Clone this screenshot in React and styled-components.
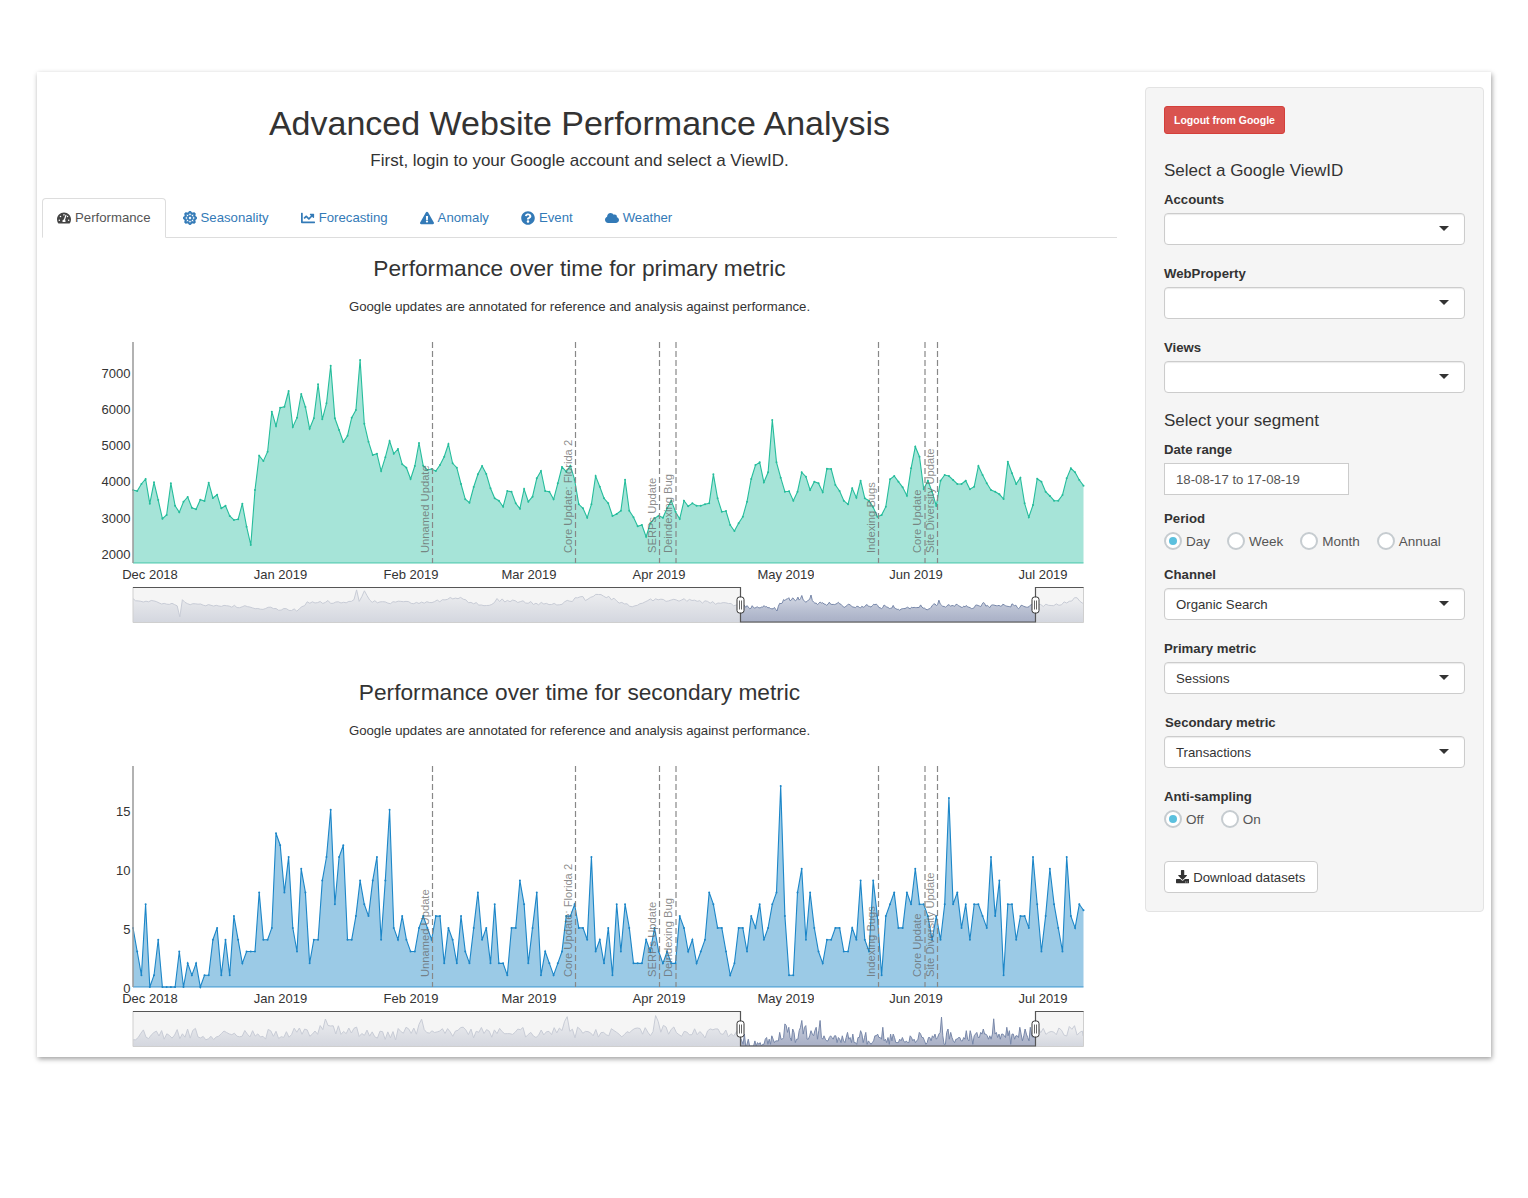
import React from "react";
import styled, { createGlobalStyle } from "styled-components";
import {
  FaChartLine,
  FaCloud,
  FaDownload,
  FaExclamationTriangle,
  FaQuestionCircle,
  FaRegSun,
  FaTachometerAlt,
} from "react-icons/fa";

const GlobalStyle = createGlobalStyle`
  * { box-sizing: border-box; }
  body {
    margin: 0;
    background: #fff;
    color: #333;
    font-family: "Liberation Sans", Arial, sans-serif;
    font-size: 13.2px;
  }
`;

const Page = styled.div`
  min-height: 1198px;
  padding: 72px 0 0 37px;
`;
const Card = styled.div`
  display: flex;
  align-items: flex-start;
  width: 1454px;
  height: 985px;
  background: #fff;
  box-shadow: 1px 2px 5px rgba(0, 0, 0, 0.38);
`;
const Main = styled.main`
  width: 1075px;
  margin-left: 5px;
  padding-top: 32px;
`;
const Heading = styled.h1`
  margin: 0;
  font-size: 34px;
  font-weight: 400;
  line-height: 38px;
  text-align: center;
`;
const Lead = styled.p`
  margin: 8px 0 0;
  font-size: 17px;
  line-height: 22px;
  text-align: center;
`;
const Tabs = styled.ul`
  display: flex;
  height: 40px;
  margin: 26px 0 0;
  padding: 0;
  list-style: none;
  border-bottom: 1px solid #ddd;
`;
const Tab = styled.li`
  display: flex;
  align-items: center;
  gap: 4px;
  height: 39px;
  margin-right: 2px;
  padding: 0 14px;
  border: 1px solid ${(p) => (p.$active ? "#ddd" : "transparent")};
  border-bottom-color: ${(p) => (p.$active ? "#fff" : "transparent")};
  border-radius: 4px 4px 0 0;
  background: ${(p) => (p.$active ? "#fff" : "transparent")};
  color: ${(p) => (p.$active ? "#555" : "#337ab7")};
  svg { font-size: 14px; color: ${(p) => (p.$active ? "#444" : "#337ab7")}; }
  &:first-child { height: 40px; padding-bottom: 1px; }
`;
const SunIcon = styled(FaRegSun)`
  stroke: currentColor;
  stroke-width: 30;
`;
const Section = styled.section`
  height: 424px;
  padding-top: 17px;
`;
const SectionTitle = styled.h3`
  margin: 0;
  font-size: 22.7px;
  font-weight: 400;
  line-height: 26px;
  text-align: center;
`;
const SectionNote = styled.p`
  margin: 15px 0 23px;
  line-height: 21px;
  text-align: center;
`;
const ChartSvg = styled.svg`
  display: block;
  width: 1075px;
  height: 293px;
`;
const AxisText = styled.text`
  fill: #333;
  font-size: 13px;
  text-anchor: ${(p) => p.$anchor || "middle"};
`;
const NoteText = styled.text`
  fill: #666;
  fill-opacity: 0.75;
  font-size: 11.2px;
`;

const Sidebar = styled.aside`
  width: 339px;
  height: 825px;
  margin: 15px 0 0 28px;
  padding: 18px 18px 0;
  background: #f5f5f5;
  border: 1px solid #e3e3e3;
  border-radius: 4px;
`;
const DangerButton = styled.button`
  display: block;
  height: 28px;
  padding: 0 9px;
  background: #d9534f;
  border: 1px solid #d43f3a;
  border-radius: 3px;
  color: #fff;
  font: bold 10.5px "Liberation Sans", Arial, sans-serif;
`;
const PanelTitle = styled.h4`
  height: 20px;
  margin: ${(p) => p.$top}px 0 9px;
  font-size: 17px;
  font-weight: 400;
  line-height: 22px;
`;
const Field = styled.div`
  margin-bottom: ${(p) => p.$gap ?? 18}px;
`;
const Label = styled.label`
  display: block;
  height: 20px;
  margin: 0 0 4px ${(p) => p.$indent || 0}px;
  font-weight: 700;
  line-height: 22px;
`;
const Select = styled.div`
  position: relative;
  width: 301px;
  height: 32px;
  padding-left: 11px;
  background: #fff;
  border: 1px solid #ccc;
  border-radius: 4px;
  box-shadow: inset 0 1px 1px rgba(0, 0, 0, 0.08);
  line-height: 32px;
  &::after {
    content: "";
    position: absolute;
    top: 12px;
    right: 15px;
    border: 5px solid transparent;
    border-top-color: #333;
    border-bottom-width: 0;
  }
`;
const DateInput = styled.div`
  width: 185px;
  height: 32px;
  padding-left: 11px;
  background: #fff;
  border: 1px solid #ccc;
  color: #555;
  line-height: 32px;
`;
const RadioRow = styled.div`
  display: flex;
  gap: 17px;
  height: 18px;
`;
const Radio = styled.span`
  display: flex;
  align-items: center;
  gap: 4px;
  color: #555;
  font-size: 13.5px;
`;
const RadioMark = styled.i`
  display: flex;
  align-items: center;
  justify-content: center;
  width: 18px;
  height: 18px;
  background: #fff;
  border: 2px solid #c6ccd0;
  border-radius: 50%;
  &::after {
    content: "";
    width: 8px;
    height: 8px;
    border-radius: 50%;
    background: ${(p) => (p.$on ? "#5bc0de" : "transparent")};
  }
`;
const DownloadButton = styled.button`
  display: flex;
  align-items: center;
  gap: 4px;
  height: 32px;
  padding: 0 12px 0 11px;
  background: #fff;
  border: 1px solid #ccc;
  border-radius: 4px;
  color: #333;
  font: 13.2px "Liberation Sans", Arial, sans-serif;
`;

// traced from the plot, y in 3x pixels
const SESSIONS = [
  465, 468, 447, 432, 506, 442, 495, 551, 540, 445, 512, 532, 500, 486, 518, 523, 494, 498, 443, 489, 479, 520, 512, 543,
  555, 553, 506, 575, 630, 465, 362, 378, 350, 230, 273, 218, 215, 168, 276, 248, 177, 216, 281, 250, 148, 253, 205, 92,
  250, 285, 321, 302, 248, 225, 75, 266, 320, 360, 356, 408, 367, 318, 356, 342, 388, 398, 432, 393, 324, 392, 405, 402,
  408, 390, 365, 327, 385, 398, 447, 493, 503, 456, 418, 393, 417, 460, 490, 497, 515, 468, 470, 505, 521, 462, 500, 485,
  430, 408, 468, 470, 493, 445, 396, 410, 392, 434, 508, 520, 548, 508, 423, 455, 490, 505, 543, 537, 527, 434, 527, 547,
  574, 570, 605, 565, 550, 542, 548, 520, 497, 530, 552, 497, 514, 505, 512, 512, 508, 505, 418, 490, 530, 528, 570, 588,
  565, 545, 500, 432, 390, 382, 442, 412, 255, 382, 428, 470, 469, 497, 470, 412, 425, 465, 440, 445, 472, 401, 402, 450,
  468, 497, 508, 460, 488, 437, 490, 497, 517, 545, 540, 515, 433, 423, 440, 457, 482, 400, 335, 365, 462, 437, 470, 513,
  437, 420, 423, 435, 447, 447, 437, 463, 455, 393, 420, 445, 465, 470, 478, 492, 380, 415, 447, 428, 505, 547, 510, 431,
  440, 470, 483, 497, 497, 480, 430, 400, 412, 435, 452,
];

const TRANSACTIONS = [
  5, 3, 1, 7, 0, 1, 4, 0, 0, 0, 0, 3, 0, 2, 1, 2, 0, 1, 1, 4, 5, 1, 4, 1, 6, 4, 2, 3, 3, 3, 8, 4, 4, 5, 13, 12, 8, 11, 5, 3,
  10, 8, 2, 4, 4, 9, 11, 15, 7, 11, 12, 4, 4, 6, 9, 7, 6, 9, 11, 4, 9, 15, 5, 4, 6, 4, 3, 3, 5, 6, 5, 4, 6, 6, 2, 5, 4, 2, 6,
  3, 2, 5, 8, 4, 5, 2, 7, 2, 2, 1, 5, 5, 9, 7, 2, 5, 8, 1, 3, 2, 1, 2, 3, 6, 6, 7, 5, 5, 4, 11, 3, 4, 2, 5, 1, 7, 3, 7, 5, 2,
  2, 2, 4, 3, 5, 3, 2, 3, 2, 2, 6, 5, 3, 4, 2, 3, 4, 8, 7, 5, 5, 3, 1, 2, 5, 5, 3, 6, 5, 7, 4, 5, 7, 8, 17, 6, 1, 1, 8, 10, 4,
  8, 5, 3, 2, 4, 4, 5, 5, 3, 3, 5, 4, 9, 4, 3, 9, 6, 1, 6, 7, 8, 5, 5, 8, 7, 10, 7, 7, 6, 4, 6, 4, 7, 16, 7, 8, 5, 7, 4, 7, 7,
  6, 5, 11, 6, 9, 1, 7, 7, 4, 6, 6, 5, 11, 7, 3, 6, 10, 7, 5, 3, 11, 6, 5, 7, 6.5,
];

const PLOT = { left: 91, right: 1041.5, top: 2, bottom: 223 };
const NAV = { top: 247, bottom: 283, from: 698, to: 993 };

const UPDATES = [
  { x: 390.5, label: "Unnamed Update" },
  { x: 533.5, label: "Core Update: Florida 2" },
  { x: 617.5, label: "SERPs Update" },
  { x: 634, label: "Deindexing Bug" },
  { x: 836.5, label: "Indexing Bugs" },
  { x: 883, label: "Core Update" },
  { x: 895.5, label: "Site Diversity Update" },
];

const MONTHS = [
  { x: 108, label: "Dec 2018" },
  { x: 238.5, label: "Jan 2019" },
  { x: 369, label: "Feb 2019" },
  { x: 487, label: "Mar 2019" },
  { x: 617, label: "Apr 2019" },
  { x: 744, label: "May 2019", clip: true },
  { x: 874, label: "Jun 2019" },
  { x: 1001, label: "Jul 2019" },
];

const lerp = (anchors, x) => {
  for (let i = 1; i < anchors.length; i++) {
    const [x0, y0] = anchors[i - 1];
    const [x1, y1] = anchors[i];
    if (x <= x1) return y0 + ((y1 - y0) * (x - x0)) / (x1 - x0);
  }
  return anchors[anchors.length - 1][1];
};

const makeRandom = (seed) => () => {
  seed = (seed * 16807) % 2147483647;
  return seed / 2147483647;
};

// the months before and after the selected range
const makeHistory = (anchors, from, to, swing, seed, peaked) => {
  const random = makeRandom(seed);
  const points = [];
  for (let x = from; x <= to; x += 2.6) {
    const r = random();
    const noise = peaked ? -r * swing : (r - 0.5) * swing;
    points.push([x, lerp(anchors, x) + noise]);
  }
  points.push([to, lerp(anchors, to)]);
  return points;
};

const line = (points) => points.map(([x, y]) => `${x.toFixed(1)},${y.toFixed(1)}`).join(" ");

const CHARTS = {
  primary: {
    id: "primary",
    stroke: "#26bd9c",
    fill: "#a6e4d8",
    points: SESSIONS.map((z) => z / 3 - 5),
    yTicks: [
      { y: 33, label: "7000" },
      { y: 69.3, label: "6000" },
      { y: 105.5, label: "5000" },
      { y: 141.5, label: "4000" },
      { y: 178, label: "3000" },
      { y: 214, label: "2000" },
    ],
    navY: (y) => 255 + (y - 20) * 0.0865,
    left: makeHistory(
      [
        [91, 260], [135, 264], [136, 277], [139, 278], [140, 258], [145, 264], [258, 270], [265, 262], [311, 262],
        [315, 249], [317, 262], [323, 251], [328, 262], [381, 263], [418, 257], [421, 260], [448, 267], [455, 260],
        [515, 265], [540, 257], [545, 261], [556, 253], [568, 258], [590, 267], [605, 260], [641, 260], [695, 265], [699, 265],
      ],
      91, 698.5, 3, 4711
    ),
    right: makeHistory([[993, 265], [1015, 265], [1030, 261], [1034, 256], [1041, 263]], 993.5, 1041, 3, 907),
  },
  secondary: {
    id: "secondary",
    stroke: "#1c86c8",
    fill: "#9bcae6",
    points: TRANSACTIONS.map((v) => 223 - v * 11.82),
    yTicks: [
      { y: 47, label: "15" },
      { y: 106, label: "10" },
      { y: 165, label: "5" },
      { y: 224, label: "0" },
    ],
    navY: (y) => 282 - (223 - y) * 0.144,
    left: makeHistory(
      [
        [91, 276], [150, 276], [153, 268], [156, 276], [248, 275], [280, 272], [284, 256], [288, 270], [330, 276],
        [335, 277], [353, 277], [358, 272], [376, 272], [380, 258], [384, 274], [520, 274], [525, 262], [529, 274],
        [610, 274], [615, 258], [620, 272], [695, 277], [699, 272],
      ],
      91, 698.5, 11, 2851, true
    ),
    right: makeHistory([[993, 274], [1041, 272]], 993.5, 1041, 11, 1733, true),
  },
};

const NavSlice = ({ points, fill, stroke }) => {
  const first = points[0][0];
  const last = points[points.length - 1][0];
  return (
    <>
      <polygon
        points={`${first},${NAV.bottom - 1} ${line(points)} ${last},${NAV.bottom - 1}`}
        fill={`url(#${fill})`}
      />
      <polyline points={line(points)} fill="none" stroke={stroke} strokeWidth="1" />
    </>
  );
};

const Handle = ({ x }) => (
  <g>
    <rect x={x - 3.5} y={257} width={7} height={16} rx={2.5} fill="#fff" stroke="#333" />
    <path d={`M${x - 1} 260.5v9M${x + 1} 260.5v9`} stroke="#666" fill="none" />
  </g>
);

const TimeChart = ({ chart }) => {
  const step = (PLOT.right - PLOT.left) / (chart.points.length - 1);
  const main = chart.points.map((y, i) => [PLOT.left + i * step, y]);
  const span = (NAV.to - NAV.from) / (chart.points.length - 1);
  const picked = chart.points.map((y, i) => [NAV.from + 0.5 + i * span, chart.navY(y)]);
  const outsideId = `${chart.id}-nav-outside`;
  const insideId = `${chart.id}-nav-inside`;
  const clipId = `${chart.id}-tick-clip`;

  return (
    <ChartSvg viewBox="0 0 1075 293">
      <defs>
        <linearGradient id={outsideId} x1="0" y1="0" x2="0" y2="1">
          <stop offset="0" stopColor="#d5d8e0" stopOpacity="0.2" />
          <stop offset="1" stopColor="#d4d7df" />
        </linearGradient>
        <linearGradient id={insideId} x1="0" y1="0" x2="0" y2="1">
          <stop offset="0" stopColor="#8f9bb9" stopOpacity="0.35" />
          <stop offset="1" stopColor="#a9b0c6" />
        </linearGradient>
        <clipPath id={clipId}>
          <rect x={700} y={220} width={72} height={24} />
        </clipPath>
      </defs>

      <polygon
        points={`${PLOT.left},${PLOT.bottom} ${line(main)} ${PLOT.right},${PLOT.bottom}`}
        fill={chart.fill}
      />
      <polyline points={line(main)} fill="none" stroke={chart.stroke} strokeWidth="1.1" />
      {main.map(([x, y]) => (
        <circle key={x} cx={x} cy={y} r="1" fill={chart.stroke} />
      ))}
      <path d={`M${PLOT.left} ${PLOT.bottom}H${PLOT.right}`} stroke={chart.stroke} strokeOpacity="0.8" />
      <path d={`M${PLOT.left} ${PLOT.top}V${PLOT.bottom}`} stroke="#999" strokeWidth="1.5" />

      {UPDATES.map((u) => (
        <g key={u.label}>
          <path d={`M${u.x} ${PLOT.top}V${PLOT.bottom}`} stroke="#888" strokeWidth="1.2" strokeDasharray="6 3" />
          <NoteText transform={`rotate(-90 ${u.x - 4} 213)`} x={u.x - 4} y={213}>
            {u.label}
          </NoteText>
        </g>
      ))}

      {chart.yTicks.map((t) => (
        <AxisText key={t.label} x={88.5} y={t.y} $anchor="end" dominantBaseline="central">
          {t.label}
        </AxisText>
      ))}
      {MONTHS.map((m) => (
        <AxisText key={m.label} x={m.x} y={238.5} clipPath={m.clip ? `url(#${clipId})` : undefined}>
          {m.label}
        </AxisText>
      ))}

      <rect x={PLOT.left} y={NAV.top} width={PLOT.right - PLOT.left} height={NAV.bottom - NAV.top} fill="#f5f5f5" />
      <rect x={NAV.from} y={NAV.top} width={NAV.to - NAV.from} height={NAV.bottom - NAV.top} fill="#fff" />
      <NavSlice points={chart.left} fill={outsideId} stroke="#c8ccd6" />
      <NavSlice points={chart.right} fill={outsideId} stroke="#c8ccd6" />
      <NavSlice points={picked} fill={insideId} stroke="#7787a9" />
      <path
        d={`M${PLOT.left} ${NAV.top}V${NAV.bottom - 0.5}H${PLOT.right}V${NAV.top}`}
        fill="none"
        stroke="#cfcfcf"
      />
      <path
        d={`M${PLOT.left} ${NAV.top + 0.5}H${NAV.from + 0.5}V${NAV.bottom - 1}H${NAV.to + 0.5}V${NAV.top + 0.5}H${PLOT.right}`}
        fill="none"
        stroke="#555"
        strokeWidth="1.2"
      />
      <Handle x={NAV.from + 0.5} />
      <Handle x={NAV.to + 0.5} />
    </ChartSvg>
  );
};

const ChartSection = ({ title, chart }) => (
  <Section>
    <SectionTitle>{title}</SectionTitle>
    <SectionNote>Google updates are annotated for reference and analysis against performance.</SectionNote>
    <TimeChart chart={chart} />
  </Section>
);

const SelectField = ({ label, value, indent }) => (
  <Field>
    <Label $indent={indent}>{label}</Label>
    <Select>{value}</Select>
  </Field>
);

const RadioField = ({ label, options, gap }) => (
  <Field $gap={gap}>
    <Label>{label}</Label>
    <RadioRow>
      {options.map((option, i) => (
        <Radio key={option}>
          <RadioMark $on={i === 0} />
          {option}
        </Radio>
      ))}
    </RadioRow>
  </Field>
);

const App = () => {
  return (
    <Page>
      <GlobalStyle />
      <Card>
        <Main>
          <Heading>Advanced Website Performance Analysis</Heading>
          <Lead>First, login to your Google account and select a ViewID.</Lead>
          <Tabs>
            <Tab $active>
              <FaTachometerAlt />
              Performance
            </Tab>
            <Tab>
              <SunIcon />
              Seasonality
            </Tab>
            <Tab>
              <FaChartLine />
              Forecasting
            </Tab>
            <Tab>
              <FaExclamationTriangle />
              Anomaly
            </Tab>
            <Tab>
              <FaQuestionCircle />
              Event
            </Tab>
            <Tab>
              <FaCloud />
              Weather
            </Tab>
          </Tabs>
          <ChartSection title="Performance over time for primary metric" chart={CHARTS.primary} />
          <ChartSection title="Performance over time for secondary metric" chart={CHARTS.secondary} />
        </Main>
        <Sidebar>
          <DangerButton>Logout from Google</DangerButton>
          <PanelTitle $top={26}>Select a Google ViewID</PanelTitle>
          <SelectField label="Accounts" />
          <SelectField label="WebProperty" />
          <SelectField label="Views" />
          <PanelTitle $top={-1}>Select your segment</PanelTitle>
          <Field $gap={13}>
            <Label>Date range</Label>
            <DateInput>18-08-17 to 17-08-19</DateInput>
          </Field>
          <RadioField label="Period" options={["Day", "Week", "Month", "Annual"]} gap={14} />
          <SelectField label="Channel" value="Organic Search" />
          <SelectField label="Primary metric" value="Sessions" />
          <SelectField label="Secondary metric" value="Transactions" indent={1} />
          <RadioField label="Anti-sampling" options={["Off", "On"]} gap={33} />
          <DownloadButton>
            <FaDownload />
            Download datasets
          </DownloadButton>
        </Sidebar>
      </Card>
    </Page>
  );
};

export default App;
